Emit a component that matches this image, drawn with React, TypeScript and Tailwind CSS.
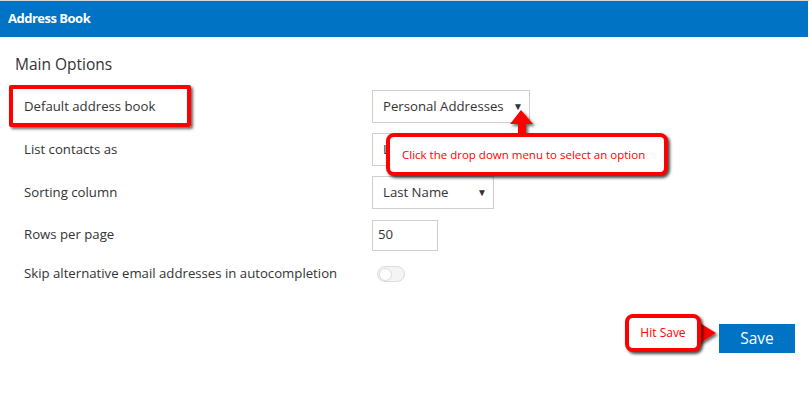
import React from "react";

const font = { fontFamily: '"Open Sans", "Liberation Sans", sans-serif' };

function Row({ label, children, h }: { label: string; children?: React.ReactNode; h: string }) {
  return (
    <div className={`flex items-center ${h}`}>
      <div className="w-[372px] pl-[24px] text-[13.2px] text-[#333]">{label}</div>
      <div className="flex items-center">{children}</div>
    </div>
  );
}

function Select({ value, w }: { value: string; w: string }) {
  return (
    <div className={`flex h-[33px] ${w} items-center justify-between border border-[#cfcfcf] bg-white pl-[10px] pr-[6px] text-[13.2px] text-[#333]`}>
      <span>{value}</span>
      <span className="text-[10px] text-[#333]">▼</span>
    </div>
  );
}

export default function App() {
  return (
    <div className="relative h-[405px] w-[809px] overflow-hidden bg-white" style={font}>
      <div className="h-px bg-[#d8d8d8]" />
      <div className="mr-px flex h-[36px] items-center bg-[#0073c4] pl-[8px] text-[13px] font-bold tracking-[-0.5px] text-white">
        Address Book
      </div>
      <div className="h-[48px] pl-[15px] pt-[16px] text-[15.5px] text-[#333]">Main Options</div>
      <Row label="Default address book" h="h-[43px]">
        <Select value="Personal Addresses" w="w-[158px]" />
      </Row>
      <Row label="List contacts as" h="h-[43px]">
        <Select value="Last, First" w="w-[158px]" />
      </Row>
      <Row label="Sorting column" h="h-[43px]">
        <Select value="Last Name" w="w-[122px]" />
      </Row>
      <Row label="Rows per page" h="h-[42px]">
        <div className="flex h-[31px] w-[66px] items-center border border-[#cfcfcf] pl-[5px] text-[13.2px] text-[#333]">50</div>
      </Row>
      <Row label="Skip alternative email addresses in autocompletion" h="h-[36px]">
        <div className="ml-[5px] flex h-[16px] w-[28px] items-center rounded-full border border-[#dcdcdc] bg-[#f4f4f4] p-px">
          <div className="h-[13px] w-[13px] rounded-full border border-[#dcdcdc] bg-white" />
        </div>
      </Row>
      <div className="flex justify-end pr-[14px] pt-[32px]">
        <div className="flex h-[29px] w-[76px] items-center justify-center bg-[#0073c4] text-[15.5px] text-white">Save</div>
      </div>

      {/* Highlight box around Default address book */}
      <div className="absolute left-[9px] top-[85px] h-[42px] w-[182px] rounded-[2px] border-[4px] border-[#ff0000] shadow-[2px_2px_3px_rgba(0,0,0,0.6)]" />

      {/* Up arrow */}
      <svg className="absolute left-[505px] top-[106px]" width="34" height="32" viewBox="0 0 34 32">
        <defs>
          <filter id="sh" x="-30%" y="-30%" width="160%" height="160%">
            <feDropShadow dx="2" dy="2" stdDeviation="1.5" floodColor="#000" floodOpacity="0.6" />
          </filter>
        </defs>
        <path d="M16 4 L28 18 L21 18 L21 30 L13 30 L13 18 L5 18 Z" fill="#ff0000" filter="url(#sh)" />
      </svg>

      {/* Dropdown callout */}
      <div className="absolute left-[386px] top-[133px] flex h-[43px] w-[282px] items-center rounded-[8px] border-[4px] border-[#ff0000] bg-white pl-[12px] text-[11.5px] text-[#ff0000] shadow-[2px_2px_3px_rgba(0,0,0,0.7)]">
        Click the drop down menu to select an option
      </div>

      {/* Hit Save callout */}
      <svg className="absolute left-[696px] top-[319px]" width="24" height="30" viewBox="0 0 24 30">
        <defs>
          <filter id="sh2" x="-30%" y="-30%" width="160%" height="160%">
            <feDropShadow dx="2" dy="2" stdDeviation="1.5" floodColor="#000" floodOpacity="0.6" />
          </filter>
        </defs>
        <path d="M2 3 L20 14 L2 25 Z" fill="#ff0000" filter="url(#sh2)" />
      </svg>
      <div className="absolute left-[625px] top-[314px] flex h-[38px] w-[76px] items-center justify-center rounded-[8px] border-[4px] border-[#ff0000] bg-white text-[12px] text-[#ff0000] shadow-[2px_2px_3px_rgba(0,0,0,0.7)]">
        Hit Save
      </div>
    </div>
  );
}
